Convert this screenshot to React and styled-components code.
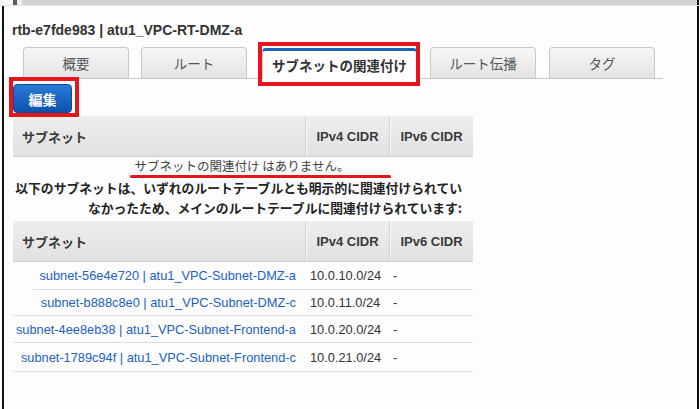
import React from "react";
import styled, { createGlobalStyle } from "styled-components";

const GlobalStyle = createGlobalStyle`
  html, body {
    margin: 0;
    padding: 0;
    background: #fdfdfd;
    overflow: hidden;
  }
  body {
    font-family: "Liberation Sans", "Noto Sans CJK JP", Arial, sans-serif;
    color: #333;
  }
`;

const tabs = [
  { label: "概要", width: 106, gap: 0 },
  { label: "ルート", width: 106, gap: 12 },
  { label: "サブネットの関連付け", width: 155, gap: 15, active: true },
  { label: "ルート伝播", width: 106, gap: 13 },
  { label: "タグ", width: 106, gap: 13 },
];

const subnets = [
  { name: "subnet-56e4e720 | atu1_VPC-Subnet-DMZ-a", ipv4: "10.0.10.0/24", ipv6: "-", indent: 20, height: 28 },
  { name: "subnet-b888c8e0 | atu1_VPC-Subnet-DMZ-c", ipv4: "10.0.11.0/24", ipv6: "-", indent: 0, height: 26 },
  { name: "subnet-4ee8eb38 | atu1_VPC-Subnet-Frontend-a", ipv4: "10.0.20.0/24", ipv6: "-", indent: 0, height: 27 },
  { name: "subnet-1789c94f | atu1_VPC-Subnet-Frontend-c", ipv4: "10.0.21.0/24", ipv6: "-", indent: 0, height: 29 },
];

export default function App() {
  return (
    <>
      <GlobalStyle />
      <TopBar />
      <Frame>
        <Title>rtb-e7fde983 | atu1_VPC-RT-DMZ-a</Title>
        <TabStrip>
          {tabs.map((t) => (
            <Tab key={t.label} $active={t.active} $width={t.width} $gap={t.gap}>
              {t.label}
              {t.active && <TabMark />}
            </Tab>
          ))}
        </TabStrip>

        <Toolbar>
          <EditButton>
            編集
            <ButtonMark />
          </EditButton>
        </Toolbar>

        <Table>
          <HeaderRow>
            <HeadCell>サブネット</HeadCell>
            <HeadCell $center>IPv4 CIDR</HeadCell>
            <HeadCell $center>IPv6 CIDR</HeadCell>
          </HeaderRow>
        </Table>

        <Empty>
          <Underlined>サブネットの関連付け はありません。</Underlined>
        </Empty>

        <Notice>
          以下のサブネットは、いずれのルートテーブルとも明示的に関連付けられてい
          <br />
          なかったため、メインのルートテーブルに関連付けられています:
        </Notice>

        <Table $top={3}>
          <HeaderRow>
            <HeadCell>サブネット</HeadCell>
            <HeadCell $center>IPv4 CIDR</HeadCell>
            <HeadCell $center>IPv6 CIDR</HeadCell>
          </HeaderRow>
          {subnets.map((s) => (
            <Row key={s.name} $indent={s.indent} $height={s.height}>
              <NameCell>
                <SubnetLink href="#">{s.name}</SubnetLink>
              </NameCell>
              <Cell $pad={5}>{s.ipv4}</Cell>
              <Cell $pad={4}>{s.ipv6}</Cell>
            </Row>
          ))}
        </Table>
      </Frame>
    </>
  );
}

const TopBar = styled.div`
  height: 5px;
  background: linear-gradient(
    to right,
    #f4f4f4 0 13px,
    #5a5a5a 13px 17px,
    #efefef 17px 22px,
    #d3d3d3 22px 697px,
    #111 697px 699px,
    #fdfdfd 699px
  );
  border-bottom: 1px solid #e4e4e4;
`;

const Frame = styled.div`
  margin-left: 2px;
  width: 697px;
  height: 403px;
  border-left: 2px solid #111;
  border-right: 2px solid #111;
  padding: 14px 0 0 8px;
  box-sizing: border-box;
  background: #fdfdfd;
`;

const Title = styled.h2`
  margin: 0;
  font-size: 14px;
  font-weight: bold;
  color: #333;
  line-height: 20px;
`;

const TabStrip = styled.div`
  display: flex;
  align-items: flex-end;
  width: 651px;
  margin-top: 6px;
  padding-left: 11px;
  box-sizing: border-box;
  border-bottom: 1px solid #c9c9c9;
  height: 33px;
`;

const Tab = styled.div`
  position: relative;
  flex: none;
  width: ${(p) => p.$width}px;
  height: 31px;
  margin-left: ${(p) => p.$gap}px;
  margin-bottom: ${(p) => (p.$active ? -1 : 0)}px;
  box-sizing: border-box;
  display: flex;
  align-items: center;
  justify-content: center;
  font-family: "Noto Sans CJK JP", "Liberation Sans", sans-serif;
  font-size: 13.5px;
  font-weight: ${(p) => (p.$active ? "bold" : "normal")};
  color: ${(p) => (p.$active ? "#333" : "#555")};
  border: 1px solid #c8c8c8;
  border-bottom: none;
  border-radius: 4px 4px 0 0;
  background: ${(p) =>
    p.$active ? "#fff" : "linear-gradient(#f7f7f7, #e3e3e3)"};
  border-top: ${(p) => (p.$active ? "3px solid #1c64b8" : "1px solid #c8c8c8")};
`;

const TabMark = styled.span`
  position: absolute;
  left: -5px;
  right: -4px;
  top: -9px;
  bottom: -7px;
  border: 4px solid #e8141c;
  pointer-events: none;
`;

const Toolbar = styled.div`
  display: flex;
  padding: 5px 0 0 1px;
  height: 32px;
`;

const EditButton = styled.button`
  position: relative;
  width: 59px;
  height: 29px;
  border: 1px solid #0b4a9c;
  border-radius: 4px;
  background: linear-gradient(#2a7bd8, #0c52ad);
  color: #fff;
  font-family: "Noto Sans CJK JP", sans-serif;
  font-size: 14px;
  font-weight: bold;
  padding: 0;
  cursor: pointer;
`;

const ButtonMark = styled.span`
  position: absolute;
  left: -5px;
  right: -8px;
  top: -8px;
  bottom: -5px;
  border: 4px solid #e8141c;
  pointer-events: none;
`;

const Table = styled.div`
  width: 460px;
  margin-left: 1px;
  margin-top: ${(p) => p.$top || 0}px;
`;

const HeaderRow = styled.div`
  display: grid;
  grid-template-columns: 292px 84px 84px;
  height: 41px;
  background: linear-gradient(#eeeeee, #e1e1e1);
  border-bottom: 1px solid #cfcfcf;
  box-sizing: border-box;
`;

const HeadCell = styled.div`
  display: flex;
  align-items: center;
  justify-content: ${(p) => (p.$center ? "center" : "flex-start")};
  padding-left: ${(p) => (p.$center ? 0 : 9)}px;
  font-family: "Liberation Sans", "Noto Sans CJK JP", sans-serif;
  font-size: 13px;
  font-weight: bold;
  color: #3a3a3a;
  & + & {
    border-left: 1px solid #d2d2d2;
    box-shadow: inset 1px 0 0 #f6f6f6;
  }
`;

const Empty = styled.div`
  width: 460px;
  text-align: center;
  height: 21px;
  line-height: 18px;
`;

const Underlined = styled.span`
  position: relative;
  font-family: "Noto Sans CJK JP", sans-serif;
  font-size: 12.5px;
  color: #444;
  &::after {
    content: "";
    position: absolute;
    left: -5px;
    right: -42px;
    bottom: -3px;
    height: 3px;
    border-radius: 2px;
    background: #e8141c;
  }
`;

const Notice = styled.p`
  margin: 0;
  width: 450px;
  text-align: right;
  font-family: "Noto Sans CJK JP", sans-serif;
  font-size: 12.8px;
  font-weight: bold;
  color: #222;
  line-height: 20px;
  white-space: nowrap;
`;

const Row = styled.div`
  display: grid;
  grid-template-columns: ${(p) => 292 - p.$indent}px 84px 84px;
  margin-left: ${(p) => p.$indent}px;
  height: ${(p) => p.$height}px;
  border-bottom: 1px solid #dedede;
  box-sizing: border-box;
  align-items: center;
  font-size: 12.8px;
`;

const NameCell = styled.div`
  text-align: right;
  padding-right: 9px;
  white-space: nowrap;
`;

const Cell = styled.div`
  padding-left: ${(p) => p.$pad}px;
  color: #333;
  white-space: nowrap;
`;

const SubnetLink = styled.a`
  color: #2161c2;
  text-decoration: none;
`;
